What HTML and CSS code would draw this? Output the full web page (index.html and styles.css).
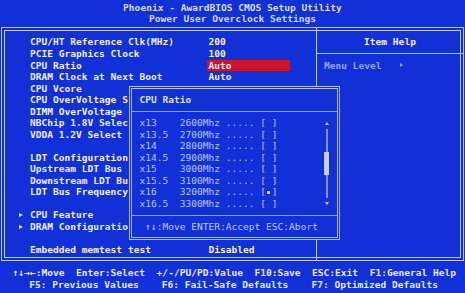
FILE: index.html
```html
<!DOCTYPE html>
<html>
<head>
<meta charset="utf-8">
<title>Phoenix - AwardBIOS CMOS Setup Utility</title>
<link rel="stylesheet" href="styles.css">
</head>
<body>
<header class="title">
  <div class="line">Phoenix - AwardBIOS CMOS Setup Utility</div>
  <div class="line">Power User Overclock Settings</div>
</header>

<main class="frame">
  <section class="menu">
    <div class="row"><span class="mark"></span><span class="label">CPU/HT Reference Clk(MHz)</span><span class="value">200</span></div>
    <div class="row"><span class="mark"></span><span class="label">PCIE Graphics Clock</span><span class="value">100</span></div>
    <div class="row"><span class="mark"></span><span class="label">CPU Ratio</span><span class="value hl">Auto</span></div>
    <div class="row"><span class="mark"></span><span class="label">DRAM Clock at Next Boot</span><span class="value">Auto</span></div>
    <div class="row"><span class="mark"></span><span class="label">CPU Vcore</span></div>
    <div class="row"><span class="mark"></span><span class="label">CPU OverVoltage S</span></div>
    <div class="row"><span class="mark"></span><span class="label">DIMM OverVoltage</span></div>
    <div class="row"><span class="mark"></span><span class="label">NBChip 1.8V Selec</span></div>
    <div class="row"><span class="mark"></span><span class="label">VDDA 1.2V Select</span></div>
    <div class="row"></div>
    <div class="row"><span class="mark"></span><span class="label">LDT Configuration</span></div>
    <div class="row"><span class="mark"></span><span class="label">Upstream LDT Bus</span></div>
    <div class="row"><span class="mark"></span><span class="label">Downstream LDT Bu</span></div>
    <div class="row"><span class="mark"></span><span class="label">LDT Bus Frequency</span></div>
    <div class="row"></div>
    <div class="row"><span class="mark sub"></span><span class="label">CPU Feature</span></div>
    <div class="row"><span class="mark sub"></span><span class="label">DRAM Configuratio</span></div>
    <div class="row"></div>
    <div class="row"><span class="mark"></span><span class="label">Embedded memtest test</span><span class="value">Disabled</span></div>
  </section>
  <aside class="help">
    <div class="help-head">Item Help</div>
    <div class="help-body">Menu Level<span class="tri"></span></div>
  </aside>
</main>

<div class="popup">
  <div class="pop-head">CPU Ratio</div>
  <div class="pop-body">
    <div class="pop-items">
      <div class="item">x13    2600Mhz ..... [ ]</div>
      <div class="item">x13.5  2700Mhz ..... [ ]</div>
      <div class="item">x14    2800Mhz ..... [ ]</div>
      <div class="item">x14.5  2900Mhz ..... [ ]</div>
      <div class="item">x15    3000Mhz ..... [ ]</div>
      <div class="item">x15.5  3100Mhz ..... [ ]</div>
      <div class="item">x16    3200Mhz ..... [<span class="chk"></span>]</div>
      <div class="item">x16.5  3300Mhz ..... [ ]</div>
    </div>
    <div class="scroll">
      <div class="arr up"></div>
      <div class="track"><div class="thumb"></div></div>
      <div class="arr down"></div>
    </div>
  </div>
  <div class="pop-foot">↑↓:Move ENTER:Accept ESC:Abort</div>
</div>

<footer class="keys">
  <div class="keys-1">↑↓→←:Move  Enter:Select  +/-/PU/PD:Value  F10:Save  ESC:Exit  F1:General Help</div>
  <div class="keys-2">F5: Previous Values    F6: Fail-Safe Defaults    F7: Optimized Defaults</div>
</footer>
</body>
</html>
```

FILE: styles.css
```css
html, body {
  margin: 0;
  padding: 0;
}

body {
  width: 465px;
  height: 293px;
  overflow: hidden;
  background: #1230d8;
  font-family: "DejaVu Sans Mono", "Liberation Mono", monospace;
  font-size: 9.57px;
  font-weight: bold;
  line-height: 11.54px;
  color: #eef0ff;
  padding-top: 1.9px;
  box-sizing: border-box;
}

.title {
  text-align: center;
  color: #d6daee;
}

.line {
  height: 11.54px;
  white-space: pre;
}

.frame {
  display: flex;
  margin: 2px 1px 0 1px;
  height: 234px;
  box-sizing: border-box;
  border: 1px solid #c4ccff;
  box-shadow: inset 0 0 0 2px #1230d8, inset 0 0 0 3px #c4ccff;
}

.menu {
  width: 314px;
  flex: none;
  padding: 8.5px 0 0 16.5px;
  box-sizing: border-box;
}

.row {
  display: grid;
  grid-template-columns: 11.52px 178.56px 1fr;
  height: 11.54px;
}

.mark.sub {
  align-self: center;
  width: 0;
  height: 0;
  border-left: 4.5px solid #eef0ff;
  border-top: 2.6px solid transparent;
  border-bottom: 2.6px solid transparent;
}

.label {
  color: #eef0ff;
  white-space: pre;
}

.value {
  color: #f6f2c8;
  justify-self: start;
  white-space: pre;
}

.value.hl {
  background: #c8142c;
  color: #fbe8ec;
  margin-left: -1.6px;
  padding-left: 1.6px;
  width: 81.4px;
}

.help {
  flex: 1;
  border-left: 1px solid #c4ccff;
}

.help-head {
  padding: 8.5px 0 4.96px 0;
  text-align: center;
  border-bottom: 1px solid #b0bcff;
  color: #eef0ff;
}

.help-body {
  padding: 5.6px 0 0 7px;
  color: #8ea4ff;
  display: flex;
  align-items: center;
  white-space: pre;
}

.tri {
  width: 0;
  height: 0;
  margin-left: 18px;
  border-left: 3.5px solid #8ea4ff;
  border-top: 2.5px solid transparent;
  border-bottom: 2.5px solid transparent;
}

.popup {
  position: absolute;
  left: 129px;
  top: 86px;
  width: 211px;
  height: 154px;
  box-sizing: border-box;
  border: 3px double #b0c0ff;
  background: #1230d8;
}

.pop-head {
  padding: 5.2px 0 5.26px 7.4px;
  height: 11.54px;
  border-bottom: 1px solid #8ea2f4;
  color: #d8e0ff;
}

.pop-body {
  display: flex;
  padding: 5.3px 7.4px 5.4px 7.4px;
}

.pop-items {
  flex: 1;
  font-weight: normal;
  color: #b8c4ff;
}

.item {
  height: 11.54px;
  white-space: pre;
}

.chk {
  display: inline-block;
  width: 5.76px;
  height: 6px;
  background: linear-gradient(#d0d8ff, #d0d8ff) center / 3px 3px no-repeat;
}

.scroll {
  width: 5.8px;
  display: flex;
  flex-direction: column;
  align-items: center;
}

.arr {
  height: 11.54px;
  display: flex;
  justify-content: center;
  align-items: center;
}

.arr::before {
  content: "";
  width: 0;
  height: 0;
  border-left: 2px solid transparent;
  border-right: 2px solid transparent;
}

.arr.up::before {
  border-bottom: 3.5px solid #c8d2ff;
}

.arr.down::before {
  border-top: 3.5px solid #c8d2ff;
}

.track {
  flex: 1;
  width: 5px;
  background: linear-gradient(#7c94f2, #7c94f2) center / 2px 100% no-repeat;
}

.thumb {
  margin-top: 23px;
  height: 23px;
  width: 5px;
  background: #c4ceff;
}

.pop-foot {
  border-top: 1px solid #8ea2f4;
  padding: 5.2px 0 0 13.2px;
  font-weight: normal;
  color: #c0ccff;
  white-space: pre;
}

.keys {
  margin-top: 6.3px;
  color: #e8eeff;
}

.keys-1 {
  padding-left: 12.7px;
  white-space: pre;
}

.keys-2 {
  padding-left: 29.3px;
  white-space: pre;
}
```
